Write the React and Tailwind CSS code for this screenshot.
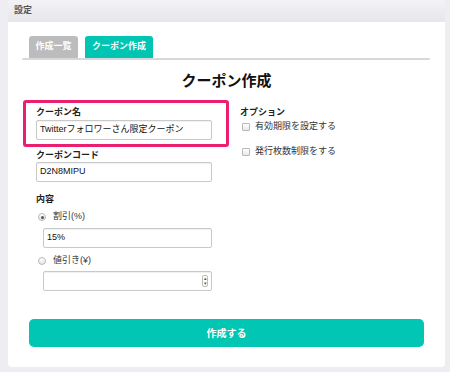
const FONT = "font-[family-name:'Liberation_Sans','Noto_Sans_CJK_JP',sans-serif]";

function Radio({ checked, label }) {
  return (
    <div className="flex h-[14px] items-center">
      <span className="ml-[2px] flex h-[8px] w-[8px] items-center justify-center rounded-full border border-[#b8b8b8] bg-gradient-to-b from-white to-[#e6e6e6]">
        {checked && <span className="h-[3px] w-[3px] rounded-full bg-[#555]" />}
      </span>
      <span className="ml-[7px] text-[9px] text-[#333]">{label}</span>
    </div>
  );
}

function Check({ label }) {
  return (
    <div className="flex h-[14px] items-center">
      <span className="ml-[2px] h-[8px] w-[8px] rounded-[1px] border border-[#b8b8b8] bg-gradient-to-b from-white to-[#e8e8e8]" />
      <span className="ml-[5px] text-[9px] text-[#333]">{label}</span>
    </div>
  );
}

function Field({ value, className = '', spinner = false }) {
  return (
    <div
      className={`flex h-[20px] items-center justify-between rounded-[2px] border border-[#c9c9c9] bg-white pl-[3px] pr-[3px] text-[9px] text-[#111] shadow-[inset_0_1px_1px_rgba(0,0,0,0.06)] ${className}`}
    >
      <span>{value}</span>
      {spinner && (
        <span className="flex h-[12px] w-[6px] flex-col items-center justify-center rounded-[2px] border border-[#bbb] text-[5px] leading-[5px] text-[#555]">
          <span>▴</span>
          <span>▾</span>
        </span>
      )}
    </div>
  );
}

export default function App() {
  return (
    <div className={`h-[372px] w-[450px] bg-[#eeeef2] pl-[8px] ${FONT}`}>
      <div className="w-[437px]">
        <div className="flex h-[22px] items-center bg-gradient-to-b from-[#f3f3f6] to-[#e6e6eb] pl-[6px] text-[9px] font-bold text-[#555]">
          設定
        </div>

        <div className="h-[345px] rounded-b-[4px] bg-white px-[14px] pt-[14px]">
          <div className="flex gap-[7px] pl-[7px]">
            <div className="flex h-[22px] w-[49px] items-center justify-center rounded-t-[3px] bg-[#bcbcbc] text-[9px] font-bold text-white">
              作成一覧
            </div>
            <div className="flex h-[22px] w-[68px] items-center justify-center rounded-t-[3px] bg-[#00c5b2] text-[9px] font-bold text-white">
              クーポン作成
            </div>
          </div>
          <div className="mr-[1px] h-[2px] rounded-full bg-[#d8d8d8]" />

          <h1 className="mt-[11px] text-center text-[15px] font-bold leading-[20px] text-[#111]">
            クーポン作成
          </h1>

          <div className="mt-[9px] flex">
            <div className="w-[207px] pl-[1px]">
              <div className="rounded-[3px] border-[3px] border-[#ea1f70] pb-[4px] pl-[10px] pt-[2px]">
                <div className="text-[9px] font-bold leading-[14px] text-[#222]">クーポン名</div>
                <Field className="mt-[1px] w-[176px]" value="Twitterフォロワーさん限定クーポン" />
              </div>

              <div className="pl-[13px]">
                <div className="mt-[1px] text-[9px] font-bold leading-[14px] text-[#222]">クーポンコード</div>
                <Field className="w-[176px]" value="D2N8MIPU" />

                <div className="mt-[10px] text-[9px] font-bold leading-[14px] text-[#222]">内容</div>
                <div className="mt-[4px]">
                  <Radio checked label="割引(%)" />
                </div>
                <Field className="ml-[7px] mt-[4px] w-[169px]" value="15%" />
                <div className="mt-[6px]">
                  <Radio label="値引き(¥)" />
                </div>
                <Field className="ml-[7px] mt-[3px] w-[169px]" value="" spinner />
              </div>
            </div>

            <div className="ml-[11px] pt-[5px]">
              <div className="text-[9px] font-bold leading-[14px] text-[#222]">オプション</div>
              <div className="mt-[1px]">
                <Check label="有効期限を設定する" />
              </div>
              <div className="mt-[11px]">
                <Check label="発行枚数制限をする" />
              </div>
            </div>
          </div>

          <div className="mt-[28px] px-[7px]">
            <button className="flex h-[28px] w-full items-center justify-center rounded-[5px] bg-[#00c6b3] text-[10px] font-bold text-white">
              作成する
            </button>
          </div>
        </div>
      </div>
    </div>
  );
}
